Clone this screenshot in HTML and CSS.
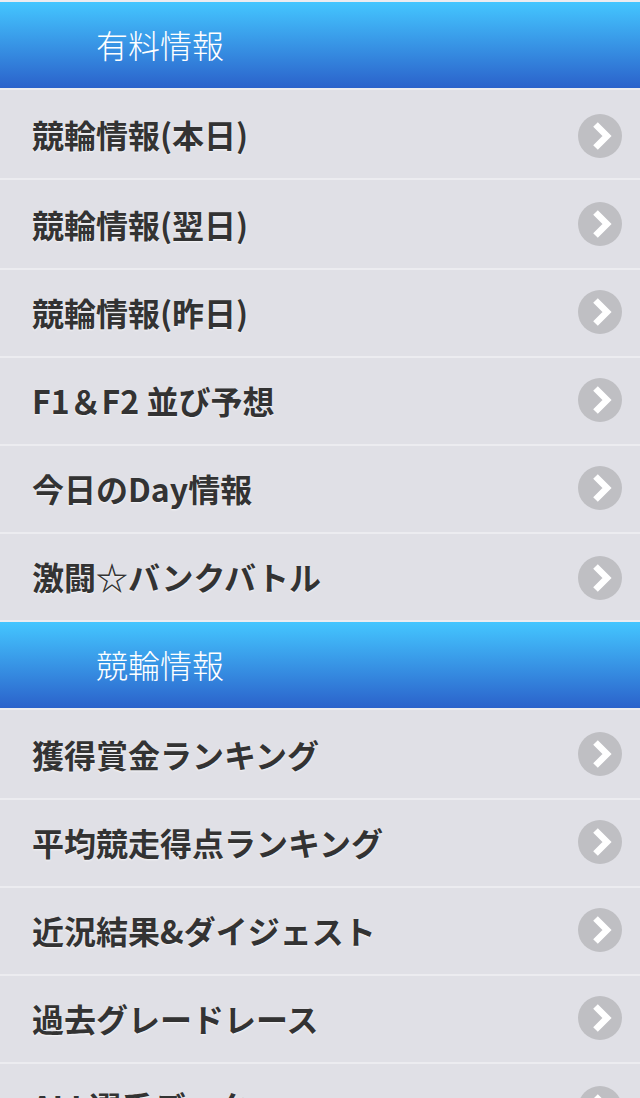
FILE: index.html
```html
<!DOCTYPE html>
<html lang="ja">
<head>
    <meta charset="UTF-8">
    <meta name="viewport" content="width=device-width, initial-scale=1.0">
    <title>競輪情報</title>
    <link rel="stylesheet" href="styles.css">
</head>
<body>

<div class="page">
    <h2 class="list-title">有料情報</h2>
    <ul class="menu">
        <li class="menu-item tall arrow-low"><span>競輪情報(本日)</span><svg class="arrow" viewBox="0 0 44 44"><circle cx="22" cy="22" r="22"/><path d="M17.5 10.5 L29 22 L17.5 33.5"/></svg></li>
        <li class="menu-item tall"><span>競輪情報(翌日)</span><svg class="arrow" viewBox="0 0 44 44"><circle cx="22" cy="22" r="22"/><path d="M17.5 10.5 L29 22 L17.5 33.5"/></svg></li>
        <li class="menu-item"><span>競輪情報(昨日)</span><svg class="arrow" viewBox="0 0 44 44"><circle cx="22" cy="22" r="22"/><path d="M17.5 10.5 L29 22 L17.5 33.5"/></svg></li>
        <li class="menu-item"><span>F1＆F2 並び予想</span><svg class="arrow" viewBox="0 0 44 44"><circle cx="22" cy="22" r="22"/><path d="M17.5 10.5 L29 22 L17.5 33.5"/></svg></li>
        <li class="menu-item"><span>今日のDay情報</span><svg class="arrow" viewBox="0 0 44 44"><circle cx="22" cy="22" r="22"/><path d="M17.5 10.5 L29 22 L17.5 33.5"/></svg></li>
        <li class="menu-item arrow-low"><span>激闘☆バンクバトル</span><svg class="arrow" viewBox="0 0 44 44"><circle cx="22" cy="22" r="22"/><path d="M17.5 10.5 L29 22 L17.5 33.5"/></svg></li>
    </ul>
    <h2 class="list-title">競輪情報</h2>
    <ul class="menu">
        <li class="menu-item tall"><span>獲得賞金ランキング</span><svg class="arrow" viewBox="0 0 44 44"><circle cx="22" cy="22" r="22"/><path d="M17.5 10.5 L29 22 L17.5 33.5"/></svg></li>
        <li class="menu-item"><span>平均競走得点ランキング</span><svg class="arrow" viewBox="0 0 44 44"><circle cx="22" cy="22" r="22"/><path d="M17.5 10.5 L29 22 L17.5 33.5"/></svg></li>
        <li class="menu-item"><span>近況結果&amp;ダイジェスト</span><svg class="arrow" viewBox="0 0 44 44"><circle cx="22" cy="22" r="22"/><path d="M17.5 10.5 L29 22 L17.5 33.5"/></svg></li>
        <li class="menu-item"><span>過去グレードレース</span><svg class="arrow" viewBox="0 0 44 44"><circle cx="22" cy="22" r="22"/><path d="M17.5 10.5 L29 22 L17.5 33.5"/></svg></li>
        <li class="menu-item arrow-low"><span>ALL選手データ</span><svg class="arrow" viewBox="0 0 44 44"><circle cx="22" cy="22" r="22"/><path d="M17.5 10.5 L29 22 L17.5 33.5"/></svg></li>
    </ul>
</div>

</body>
</html>
```

FILE: styles.css
```css
html, body {
    margin: 0;
    padding: 0;
}
body {
    font-family: "Noto Sans CJK JP", "Noto Sans", sans-serif;
    background-color: #ececf0;
}
.page {
    height: 1098px;
    overflow: hidden;
}
.list-title {
    margin: 2px 0 0;
    height: 86px;
    box-sizing: border-box;
    padding: 0 0 2px 96px;
    display: flex;
    align-items: center;
    font-size: 32px;
    font-weight: 300;
    color: #fff;
    background: linear-gradient(to bottom, #44c6ff, #2b62cb);
}
.menu {
    list-style: none;
    margin: 0;
    padding: 0;
}
.menu-item {
    height: 84px;
    padding: 0 18px 2px 32px;
    display: flex;
    justify-content: space-between;
    align-items: center;
    border-top: 2px solid #ececf0;
    font-size: 32px;
    font-weight: 700;
    color: #333;
    background-color: #e0e0e6;
    text-shadow: 0 1px 2px rgba(255, 255, 255, 0.7);
}
.menu-item.tall {
    height: 88px;
    padding-bottom: 0;
}
.arrow {
    width: 44px;
    height: 44px;
}
.arrow-low .arrow {
    margin-top: 4px;
}
.arrow circle {
    fill: #bfbfc3;
}
.arrow path {
    fill: none;
    stroke: #fff;
    stroke-width: 6.5;
}
```
